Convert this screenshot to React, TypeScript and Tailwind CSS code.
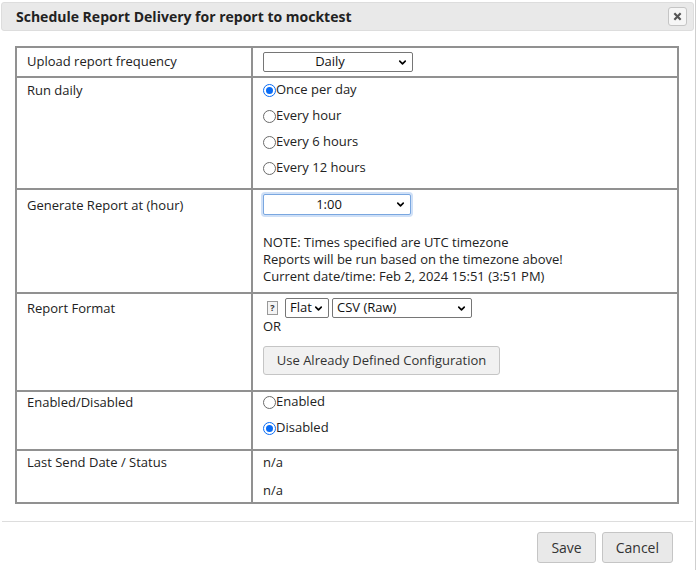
import { ChevronDown } from "lucide-react";

const font = { fontFamily: '"Open Sans", "Liberation Sans", sans-serif' };

function Select({ value, className, center = true, focused = false }: { value: string; className: string; center?: boolean; focused?: boolean }) {
  return (
    <div
      className={`relative flex items-center bg-white border rounded-[2px] text-[13px] text-[#111] ${
        focused ? "border-[#7aa7e0] ring-2 ring-[#cfe0f7]" : "border-[#767676]"
      } ${className}`}
    >
      <span className={`flex-1 ${center ? "text-center pr-4" : "pl-[4px]"}`}>{value}</span>
      <ChevronDown className="absolute right-[4px] w-[11px] h-[11px] text-black" strokeWidth={3.5} />
    </div>
  );
}

function Radio({ label, checked = false }: { label: string; checked?: boolean }) {
  return (
    <div className="flex items-center h-[18px]">
      {checked ? (
        <span className="w-[13px] h-[13px] rounded-full border-[1.5px] border-[#0a6cf5] bg-white flex items-center justify-center shrink-0">
          <span className="w-[7px] h-[7px] rounded-full bg-[#0a6cf5]" />
        </span>
      ) : (
        <span className="w-[13px] h-[13px] rounded-full bg-white border border-[#6b6b6b] shrink-0" />
      )}
      <span>{label}</span>
    </div>
  );
}

const cell = "border-2 border-[#919191] align-top";

export default function App() {
  return (
    <div style={font} className="w-[696px] h-[570px] bg-white border-r border-[#cfcfcf] text-[13px] text-[#222] flex flex-col">
      {/* Title bar */}
      <div className="mx-[1px] mt-[2px] h-[29px] bg-[#e9e9e9] border border-[#dddddd] rounded-[3px] flex items-center justify-between pl-[14px] pr-[6px]">
        <span className="font-bold text-[14px] text-[#222]">Schedule Report Delivery for report to mocktest</span>
        <button className="w-[19px] h-[19px] bg-[#f6f6f6] border border-[#c5c5c5] rounded-[3px] flex items-center justify-center text-[#555]">
          <svg viewBox="0 0 10 10" className="w-[9px] h-[9px]">
            <path d="M1.5 1.5 L8.5 8.5 M8.5 1.5 L1.5 8.5" stroke="#555" strokeWidth="2.4" />
          </svg>
        </button>
      </div>

      {/* Content */}
      <div className="pt-[15px] pl-[15px] pr-[16px] pb-[17px]">
        <table className="w-full border-collapse">
          <colgroup>
            <col className="w-[236px]" />
            <col />
          </colgroup>
          <tbody>
            <tr>
              <td className={`${cell} h-[30px] pl-[10px] pt-[4px]`}>Upload report frequency</td>
              <td className={`${cell} pl-[10px] pt-[4px]`}>
                <Select value="Daily" className="w-[150px] h-[20px]" />
              </td>
            </tr>
            <tr>
              <td className={`${cell} h-[112px] pl-[10px] pt-[3px]`}>Run daily</td>
              <td className={`${cell} pl-[10px] pt-[3px]`}>
                <div className="flex flex-col gap-[8px]">
                  <Radio label="Once per day" checked />
                  <Radio label="Every hour" />
                  <Radio label="Every 6 hours" />
                  <Radio label="Every 12 hours" />
                </div>
              </td>
            </tr>
            <tr>
              <td className={`${cell} h-[104px] pl-[10px] pt-[6px]`}>Generate Report at (hour)</td>
              <td className={`${cell} pl-[10px] pt-[4px]`}>
                <Select value="1:00" className="w-[148px] h-[21px]" focused />
                <div className="mt-[19px] leading-[17px]">
                  <div>NOTE: Times specified are UTC timezone</div>
                  <div>Reports will be run based on the timezone above!</div>
                  <div>Current date/time: Feb 2, 2024 15:51 (3:51 PM)</div>
                </div>
              </td>
            </tr>
            <tr>
              <td className={`${cell} h-[98px] pl-[10px] pt-[5px]`}>Report Format</td>
              <td className={`${cell} pl-[10px] pt-[4px]`}>
                <div className="flex items-center h-[20px]">
                  <span className="ml-[4px] w-[11px] h-[14px] border border-[#999] bg-[#f4f4f4] text-[9px] font-bold leading-[12px] text-center text-[#333]">?</span>
                  <Select value="Flat" center={false} className="ml-[7px] w-[44px] h-[20px]" />
                  <Select value="CSV (Raw)" center={false} className="ml-[3px] w-[140px] h-[20px]" />
                </div>
                <div className="leading-[17px]">OR</div>
                <button className="mt-[11px] w-[237px] h-[29px] bg-[#f1f1f1] border border-[#c5c5c5] rounded-[3px] text-[13px] text-[#333]">
                  Use Already Defined Configuration
                </button>
              </td>
            </tr>
            <tr>
              <td className={`${cell} h-[59px] pl-[10px] pt-[1px]`}>Enabled/Disabled</td>
              <td className={`${cell} pl-[10px] pt-[1px]`}>
                <div className="flex flex-col gap-[8px]">
                  <Radio label="Enabled" />
                  <Radio label="Disabled" checked />
                </div>
              </td>
            </tr>
            <tr>
              <td className={`${cell} h-[53px] pl-[10px] pt-[2px]`}>Last Send Date / Status</td>
              <td className={`${cell} pl-[10px] pt-[2px]`}>
                <div className="flex flex-col gap-[10px] leading-[18px]">
                  <div>n/a</div>
                  <div>n/a</div>
                </div>
              </td>
            </tr>
          </tbody>
        </table>
      </div>

      {/* Footer */}
      <div className="mx-[2px] border-t border-[#dddddd] pt-[10px] pr-[20px] flex justify-end gap-[6px]">
        <button className="h-[31px] px-[13px] bg-[#e9e9e9] border border-[#c5c5c5] rounded-[3px] text-[14px] text-[#333]">Save</button>
        <button className="h-[31px] px-[13px] bg-[#e9e9e9] border border-[#c5c5c5] rounded-[3px] text-[14px] text-[#333]">Cancel</button>
      </div>
    </div>
  );
}
